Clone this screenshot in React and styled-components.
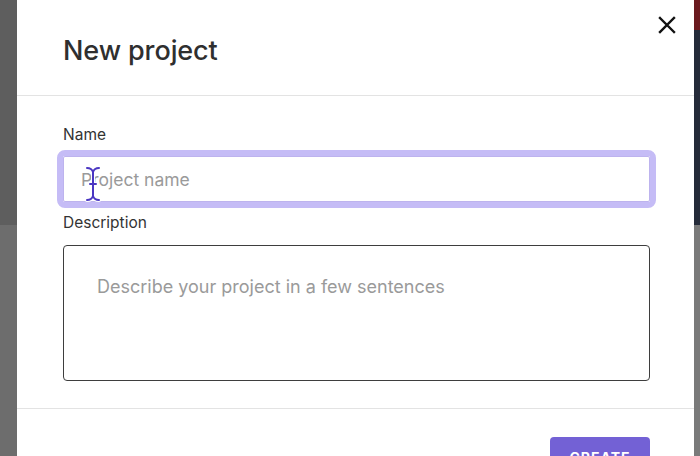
import React from 'react';
import styled, { createGlobalStyle } from 'styled-components';

const Global = createGlobalStyle`
  html, body {
    margin: 0;
    padding: 0;
    height: 456px;
    overflow: hidden;
  }
  body {
    font-family: Inter, "Noto Sans", sans-serif;
  }
`

const Backdrop = styled.div`
  display: grid;
  grid-template-columns: 17px 677px 6px;
  height: 456px;
  overflow: hidden;
`

const LeftStrip = styled.div`
  background: linear-gradient(#5e5e5e 0 225px, #6d6d6d 225px);
`

const RightStrip = styled.div`
  background: linear-gradient(#6b1a1f 0 30px, #252b3a 30px 225px, #7a7a7a 225px);
`

const Modal = styled.div`
  background: #fff;
  display: flex;
  flex-direction: column;
`

const Header = styled.div`
  height: 96px;
  border-bottom: 1px solid #e3e3e3;
  display: flex;
  align-items: flex-start;
  justify-content: space-between;
  padding: 0 16px 0 46px;
  box-sizing: border-box;
`

const Title = styled.h2`
  margin: 34px 0 0;
  font-size: 27px;
  font-weight: 500;
  color: #2f2f2f;
  letter-spacing: -0.1px;
`

const CloseButton = styled.button`
  border: none;
  background: none;
  padding: 0;
  margin-top: 14px;
  width: 22px;
  height: 22px;
  cursor: pointer;
  display: flex;
  align-items: center;
  justify-content: center;
`

const Body = styled.div`
  padding: 29px 44px 27px 46px;
  border-bottom: 1px solid #e3e3e3;
  display: flex;
  flex-direction: column;
`

const Label = styled.label`
  font-size: 15.5px;
  color: #333;
  line-height: 20px;
  margin-bottom: ${p => p.gap}px;
`

const FieldWrap = styled.div`
  position: relative;
  margin-bottom: 11px;
`

const Input = styled.input`
  box-sizing: border-box;
  display: block;
  width: 100%;
  height: 46px;
  border: 1px solid #bdb3ee;
  border-radius: 2px;
  outline: 6px solid #c5bcf6;
  padding: 0 17px;
  font-family: inherit;
  font-size: 17.5px;
  color: #333;
  &::placeholder {
    color: #9a9a9a;
  }
`

const TextArea = styled.textarea`
  box-sizing: border-box;
  display: block;
  width: 100%;
  height: 136px;
  border: 1.5px solid #3e3e3e;
  border-radius: 4px;
  padding: 29px 33px;
  font-family: inherit;
  font-size: 18px;
  line-height: 24px;
  resize: none;
  outline: none;
  &::placeholder {
    color: #9a9a9a;
  }
`

const Cursor = styled.svg`
  position: absolute;
  left: 21px;
  top: 10px;
  pointer-events: none;
`

const Footer = styled.div`
  display: flex;
  justify-content: flex-end;
  padding: 28px 44px 0;
`

const CreateButton = styled.button`
  width: 100px;
  height: 38px;
  border: none;
  border-radius: 4px;
  background: #7361d5;
  color: #fff;
  font-family: inherit;
  font-size: 14px;
  line-height: 17px;
  font-weight: 700;
  letter-spacing: 1px;
  padding: 12px 0 0;
  display: flex;
  justify-content: center;
  align-items: flex-start;
`

export default function App() {
  return (
    <>
      <Global />
      <Backdrop>
        <LeftStrip />
        <Modal>
          <Header>
            <Title>New project</Title>
            <CloseButton aria-label="Close">
              <svg width="18" height="18" viewBox="0 0 18 18">
                <path d="M2 2 L16 16 M16 2 L2 16" stroke="#111" strokeWidth="2.4" strokeLinecap="square" />
              </svg>
            </CloseButton>
          </Header>
          <Body>
            <Label gap={11}>Name</Label>
            <FieldWrap>
              <Input placeholder="Project name" />
              <Cursor width="18" height="36" viewBox="0 0 18 36">
                <path
                  d="M3 2 C6 2 8 3 9 6 C10 3 12 2 15 2 M9 6 L9 30 M3 34 C6 34 8 33 9 30 C10 33 12 34 15 34 M6 18 L12 18"
                  fill="none" stroke="#fff" strokeWidth="4" strokeLinecap="round"
                />
                <path
                  d="M3 2 C6 2 8 3 9 6 C10 3 12 2 15 2 M9 6 L9 30 M3 34 C6 34 8 33 9 30 C10 33 12 34 15 34 M6 18 L12 18"
                  fill="none" stroke="#4a36c2" strokeWidth="2" strokeLinecap="round"
                />
              </Cursor>
            </FieldWrap>
            <Label gap={12}>Description</Label>
            <TextArea placeholder="Describe your project in a few sentences" />
          </Body>
          <Footer>
            <CreateButton>CREATE</CreateButton>
          </Footer>
        </Modal>
        <RightStrip />
      </Backdrop>
    </>
  );
}
